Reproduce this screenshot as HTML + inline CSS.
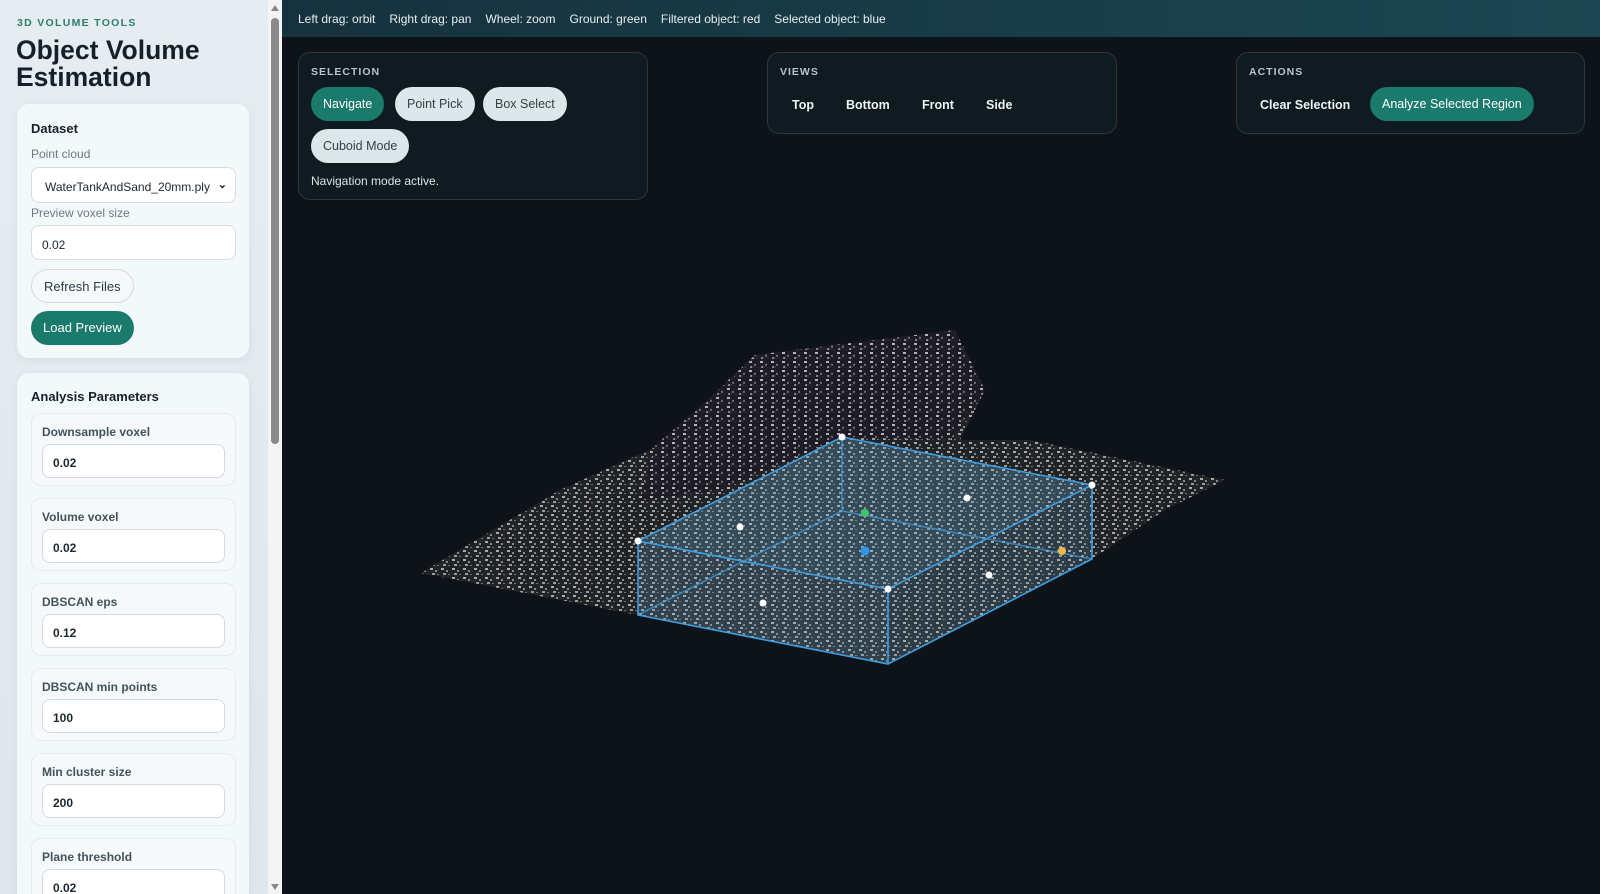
<!DOCTYPE html>
<html><head><meta charset="utf-8"><style>
*{box-sizing:border-box;margin:0;padding:0}
html,body{width:1600px;height:894px;overflow:hidden}
body{font-family:"Liberation Sans",sans-serif;background:#0e1319;position:relative}
#side{position:absolute;left:0;top:0;width:268px;height:894px;background:linear-gradient(#e6edf2,#dfe7ec);overflow:hidden}
#sb{position:absolute;left:268px;top:0;width:14px;height:894px;background:#f4f4f4}
#sb .th{position:absolute;left:3px;top:18px;width:8px;height:426px;background:#8a8a8a;border-radius:4px}
.kick{position:absolute;left:17px;top:17px;font-size:10.5px;font-weight:bold;letter-spacing:1.3px;color:#2d7d72}
h1{position:absolute;left:16px;top:37px;font-size:26.5px;line-height:27px;color:#14212b;font-weight:bold}
.card{position:absolute;left:17px;width:232px;background:#f3f8fa;border-radius:12px;box-shadow:0 2px 8px rgba(0,0,0,.06)}
.ct{position:absolute;left:14px;font-size:13px;font-weight:bold;color:#14212b}
.lb{position:absolute;left:14px;font-size:12px;color:#6b7a85}
.in{position:absolute;left:14px;width:205px;height:35px;background:#fff;border:1px solid #d6dde2;border-radius:8px;font-size:12px;color:#1a2730;padding:12px 10px}
.btn{position:absolute;border-radius:18px;font-size:13px;padding:9px 12px;height:34px}
.sub{position:absolute;left:14px;width:205px;height:73px;border:1px solid #e5ecef;border-radius:10px;background:#f5f9fb}
.sub .l{position:absolute;left:10px;top:11px;font-size:12px;font-weight:bold;color:#44525c}
.sub .i{position:absolute;left:10px;top:30px;width:183px;height:34px;background:#fff;border:1px solid #d4dadf;border-radius:8px;font-size:12px;font-weight:bold;color:#1a2730;padding:11px 10px}
#top{position:absolute;left:282px;top:0;width:1318px;height:37px;background:linear-gradient(90deg,#16323e,#1b4651);color:#e6eef2;font-size:12px;padding:12px 16px}
#top span{margin-right:14px}
.pan{position:absolute;background:#0f1a21;border:1px solid #2a3740;border-radius:12px}
.pt{position:absolute;left:12px;top:13px;font-size:10.5px;font-weight:bold;letter-spacing:1px;color:#b7c4cc}
.pb{position:absolute;height:34px;border-radius:17px;font-size:12.5px;padding:10px 12px;white-space:nowrap}
.g{background:#1a7a6c;color:#fff}.w{background:#dde6ea;color:#33414b}
.tx{position:absolute;font-size:12.5px;font-weight:bold;color:#eef3f5}
</style></head><body>
<div id="side">
<div class="kick">3D VOLUME TOOLS</div>
<h1>Object Volume<br>Estimation</h1>
<div class="card" style="top:104px;height:254px">
 <div class="ct" style="top:17px">Dataset</div>
 <div class="lb" style="top:43px">Point cloud</div>
 <div class="in" style="top:63px;padding:12px 13px;height:36px">WaterTankAndSand_20mm.ply<span style="position:absolute;right:8px;top:10px;font-size:11px;font-weight:bold">&#8964;</span></div>
 <div class="lb" style="top:102px">Preview voxel size</div>
 <div class="in" style="top:121px">0.02</div>
 <div class="btn" style="left:14px;top:165px;border:1px solid #d3dbe0;background:#f6f9fa;color:#2c3a44">Refresh Files</div>
 <div class="btn" style="left:14px;top:207px;background:#1a7a6c;color:#fff">Load Preview</div>
</div>
<div class="card" style="top:373px;height:540px">
 <div class="ct" style="top:16px">Analysis Parameters</div>
 <div class="sub" style="top:40px"><div class="l">Downsample voxel</div><div class="i">0.02</div></div>
 <div class="sub" style="top:125px"><div class="l">Volume voxel</div><div class="i">0.02</div></div>
 <div class="sub" style="top:210px"><div class="l">DBSCAN eps</div><div class="i">0.12</div></div>
 <div class="sub" style="top:295px"><div class="l">DBSCAN min points</div><div class="i">100</div></div>
 <div class="sub" style="top:380px"><div class="l">Min cluster size</div><div class="i">200</div></div>
 <div class="sub" style="top:465px"><div class="l">Plane threshold</div><div class="i">0.02</div></div>
</div>
</div>
<div id="sb"><div class="th"></div><div style="position:absolute;left:3px;top:5px;border:4px solid transparent;border-bottom:6px solid #888;border-top:0"></div><div style="position:absolute;left:3px;top:884px;border:4px solid transparent;border-top:6px solid #888;border-bottom:0"></div></div>
<div id="top"><span>Left drag: orbit</span><span>Right drag: pan</span><span>Wheel: zoom</span><span>Ground: green</span><span>Filtered object: red</span><span>Selected object: blue</span></div>

<svg style="position:absolute;left:0;top:0" width="1600" height="894">
<defs>
<pattern id="d" width="11" height="9" patternUnits="userSpaceOnUse"><rect width="11" height="9" fill="#25272b"/><rect x="1" y="1" width="3" height="2" fill="#d4cfc5"/><rect x="6" y="3" width="2" height="2" fill="#aaa59b"/><rect x="3" y="6" width="3" height="2" fill="#c2bdb3"/><rect x="8" y="7" width="2" height="1" fill="#8e8a82"/></pattern>
<pattern id="p" width="11" height="9" patternUnits="userSpaceOnUse"><rect width="11" height="9" fill="#1c1a24"/><rect x="1" y="1" width="3" height="2" fill="#b9b4c4"/><rect x="6" y="4" width="2" height="2" fill="#6e6580"/><rect x="2" y="6" width="2" height="2" fill="#8f879f"/></pattern>
</defs>
<polygon points="421,573 560,490 660,445 755,355 955,330 985,390 960,440 1030,440 1225,480 1165,510 1092,559 888,664 638,615" fill="url(#d)" opacity=".8"/>
<polygon points="655,445 760,355 955,330 985,390 950,440 842,437 720,490 640,500" fill="url(#p)" opacity=".85"/>
<polygon points="842,437 1092,485 888,589 638,541" fill="#6fb3dc" fill-opacity=".28"/>
<polygon points="638,541 888,589 888,664 638,615" fill="#6fb3dc" fill-opacity=".22"/>
<polygon points="888,589 1092,485 1092,559 888,664" fill="#6fb3dc" fill-opacity=".18"/>
<g stroke="#3f9ee0" stroke-width="1.6" fill="none">
<polygon points="842,437 1092,485 888,589 638,541"/>
<polyline points="638,541 638,615 888,664 1092,559 1092,485"/>
<line x1="888" y1="589" x2="888" y2="664"/>
<polyline points="842,437 842,511 638,615" stroke-opacity=".7"/>
<line x1="842" y1="511" x2="1092" y2="559" stroke-opacity=".7"/>
</g>
<g fill="#fff"><circle cx="842" cy="437" r="3.5"/><circle cx="1092" cy="485" r="3.5"/><circle cx="638" cy="541" r="3.5"/><circle cx="888" cy="589" r="3.5"/><circle cx="740" cy="527" r="3.5"/><circle cx="967" cy="498" r="3.5"/><circle cx="989" cy="575" r="3.5"/><circle cx="763" cy="603" r="3.5"/></g>
<circle cx="865" cy="513" r="4" fill="#3ec46d"/><circle cx="865" cy="551" r="4.5" fill="#2e95e8"/><circle cx="1062" cy="551" r="4" fill="#f0b84a"/>
</svg>

<div class="pan" style="left:298px;top:52px;width:350px;height:148px">
 <div class="pt">SELECTION</div>
 <div class="pb g" style="left:12px;top:34px">Navigate</div>
 <div class="pb w" style="left:96px;top:34px">Point Pick</div>
 <div class="pb w" style="left:184px;top:34px">Box Select</div>
 <div class="pb w" style="left:12px;top:76px">Cuboid Mode</div>
 <div style="position:absolute;left:12px;top:121px;font-size:12px;color:#dbe4e8">Navigation mode active.</div>
</div>
<div class="pan" style="left:767px;top:52px;width:350px;height:82px">
 <div class="pt">VIEWS</div>
 <div class="tx" style="left:24px;top:45px">Top</div>
 <div class="tx" style="left:78px;top:45px">Bottom</div>
 <div class="tx" style="left:154px;top:45px">Front</div>
 <div class="tx" style="left:218px;top:45px">Side</div>
</div>
<div class="pan" style="left:1236px;top:52px;width:349px;height:82px">
 <div class="pt">ACTIONS</div>
 <div class="tx" style="left:23px;top:45px">Clear Selection</div>
 <div class="pb g" style="left:133px;top:34px">Analyze Selected Region</div>
</div>
</body></html>
